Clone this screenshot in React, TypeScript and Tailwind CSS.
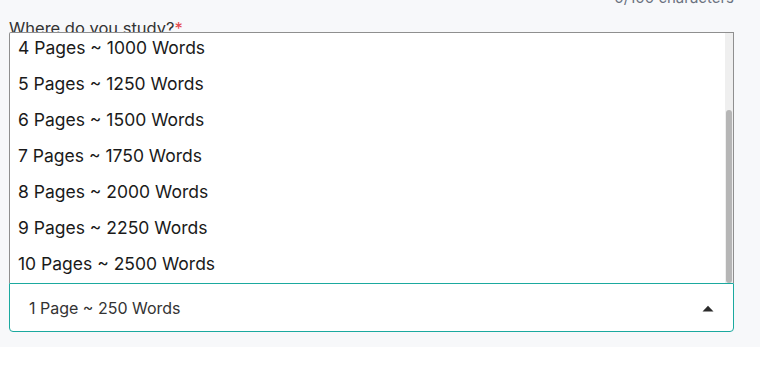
import React from 'react';

const OPTIONS = [
  '4 Pages ~ 1000 Words',
  '5 Pages ~ 1250 Words',
  '6 Pages ~ 1500 Words',
  '7 Pages ~ 1750 Words',
  '8 Pages ~ 2000 Words',
  '9 Pages ~ 2250 Words',
  '10 Pages ~ 2500 Words',
];

const PageSelect: React.FC = () => {
  return (
    <div className="relative mt-[244px]">
      {/* open dropdown list, sits above the select */}
      <div className="absolute bottom-full left-0 right-0 h-[251px] bg-white border-t border-l border-r border-[#8f8f8f] rounded-tl-[2px] overflow-hidden flex">
        <div className="flex-1 overflow-hidden">
          <ul className="-mt-[3px]">
            {OPTIONS.map((opt) => (
              <li key={opt} className="h-[36px] flex items-center pl-[8px] text-[17.5px] text-[#1a1a1a]">
                {opt}
              </li>
            ))}
          </ul>
        </div>
        {/* scrollbar */}
        <div className="w-[8px] bg-[#efefef] flex flex-col">
          <div className="h-[77px]" />
          <div className="flex-1 mx-px bg-[#b6b6b6] rounded-[3px]" />
        </div>
      </div>

      <div className="h-[49px] bg-white border border-[#1ba99f] rounded-b-[4px] flex items-center justify-between pl-[19px] pr-[19px]">
        <span className="text-[16px] text-[#333333]">1 Page ~ 250 Words</span>
        <svg width="12" height="7" viewBox="0 0 12 7" className="mt-[1px]">
          <path d="M0.5 6.5 L6 0.8 L11.5 6.5 Z" fill="#2b2b2b" />
        </svg>
      </div>
    </div>
  );
};

export default function App() {
  return (
    <div className="w-[760px] bg-white" style={{ fontFamily: 'Inter, "Noto Sans", sans-serif' }}>
      <div className="h-[347px] bg-[#f7f8fa] flex flex-col pl-[9px] pr-[26px] overflow-hidden">
        <div className="-mt-[12px] h-[20px] text-right text-[15px] leading-[20px] text-[#6b7280]">0/100 characters</div>
        <label className="mt-[9px] text-[16.5px] leading-[22px] text-[#333333]">
          Where do you study?<span className="text-[#e5484d]">*</span>
        </label>
        <PageSelect />
      </div>
    </div>
  );
}
